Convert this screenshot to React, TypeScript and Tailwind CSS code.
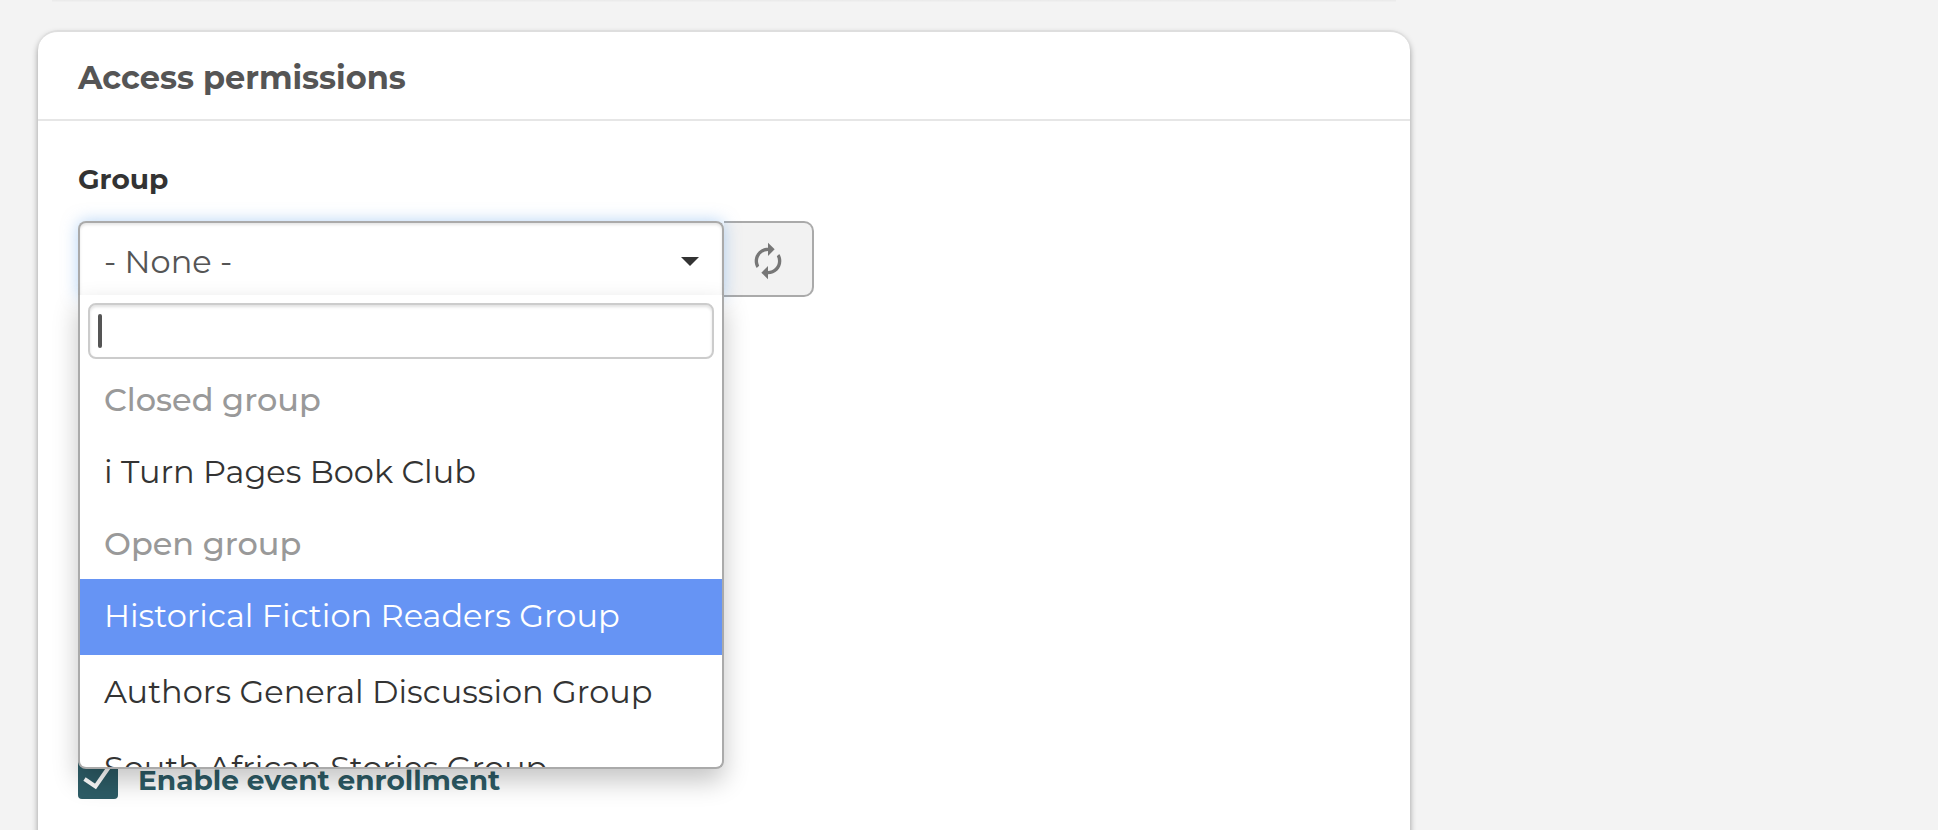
import { useState } from "react";
import { MdAutorenew } from "react-icons/md";

interface GroupOption {
  label: string;
  heading?: boolean;
}

const OPTIONS: GroupOption[] = [
  { label: "Closed group", heading: true },
  { label: "i Turn Pages Book Club" },
  { label: "Open group", heading: true },
  { label: "Historical Fiction Readers Group" },
  { label: "Authors General Discussion Group" },
  { label: "South African Stories Group" },
];

function GroupMenu() {
  const [active, setActive] = useState("Historical Fiction Readers Group");

  return (
    <div className="absolute left-0 top-[74px] z-10 h-[474px] w-[646px] overflow-hidden rounded-b-lg border-2 border-t-0 border-[#aaa] bg-white shadow-[0_12px_26px_rgba(0,0,0,0.23)]">
      <div className="p-2">
        <div className="flex h-14 items-center rounded-lg border-2 border-[#ccc] px-2 shadow-[inset_0_2px_3px_rgba(0,0,0,0.12)]">
          <span className="h-[34px] w-1 rounded-sm bg-[#555]" />
        </div>
      </div>
      <ul>
        {OPTIONS.map((option) =>
          option.heading ? (
            <li
              key={option.label}
              className="flex h-[68px] items-center whitespace-nowrap pb-[2px] pl-6 text-[32px] font-medium text-[#999]"
            >
              {option.label}
            </li>
          ) : (
            <li
              key={option.label}
              onMouseEnter={() => setActive(option.label)}
              className={`flex h-[76px] cursor-pointer items-center whitespace-nowrap pb-[2px] pl-6 text-[32px] ${
                active === option.label ? "bg-[#6694f4] text-white" : "text-[#333]"
              }`}
            >
              {option.label}
            </li>
          )
        )}
      </ul>
    </div>
  );
}

export default function App() {
  return (
    <div className="h-[830px] w-full overflow-hidden bg-[#f3f3f3] font-['Montserrat','Inter',sans-serif]">
      <div className="mx-[52px] h-[2px] w-[1344px] bg-gradient-to-b from-[#e9e9e9] to-[#f1f1f1]" />
      <section className="ml-[38px] mt-7 h-[840px] w-[1372px] rounded-[20px] border-t-2 border-[#dedede] bg-white shadow-[0_4px_6px_rgba(0,0,0,0.38)]">
        <header className="flex h-[89px] items-center border-b-2 border-[#e6e6e6] px-10 pt-[5px]">
          <h2 className="text-[32px] font-bold leading-none text-[#555]">Access permissions</h2>
        </header>
        <div className="px-10 pt-[39px]">
          <label className="block h-[61px] text-[28px] font-bold leading-[38px] text-[#333]">Group</label>
          <div className="relative flex h-[76px] w-[736px]">
            <button className="relative z-[1] flex w-[646px] items-center justify-between rounded-t-lg border-2 border-b-0 border-[#aaa] bg-white pl-6 pr-[23px] pt-1 text-[32px] text-[#555] shadow-[0_0_16px_rgba(110,170,235,0.5),inset_0_2px_3px_rgba(0,0,0,0.1)]">
              - None -
              <svg className="mb-[2px] h-[9px] w-[18px] fill-[#333]" viewBox="0 0 18 9">
                <path d="M0 0h18L9 9z" />
              </svg>
            </button>
            <button className="flex w-[90px] items-center justify-center rounded-r-[10px] border-2 border-l-0 border-[#aaa] bg-[#f2f2f2] pt-1">
              <MdAutorenew className="size-10 text-[#777]" />
            </button>
            <GroupMenu />
          </div>
          <label className="mt-[462px] flex h-10 items-center">
            <span className="flex size-10 items-center justify-center rounded bg-[#2d5c66]">
              <svg className="size-10" viewBox="0 0 40 40" fill="none" stroke="#fff" strokeWidth="4">
                <path d="M6.500 20L17.500 27.500L31 8" />
              </svg>
            </span>
            <span className="ml-5 pt-[1px] text-[28px] font-bold text-[#2d5c66]">Enable event enrollment</span>
          </label>
        </div>
      </section>
    </div>
  );
}
